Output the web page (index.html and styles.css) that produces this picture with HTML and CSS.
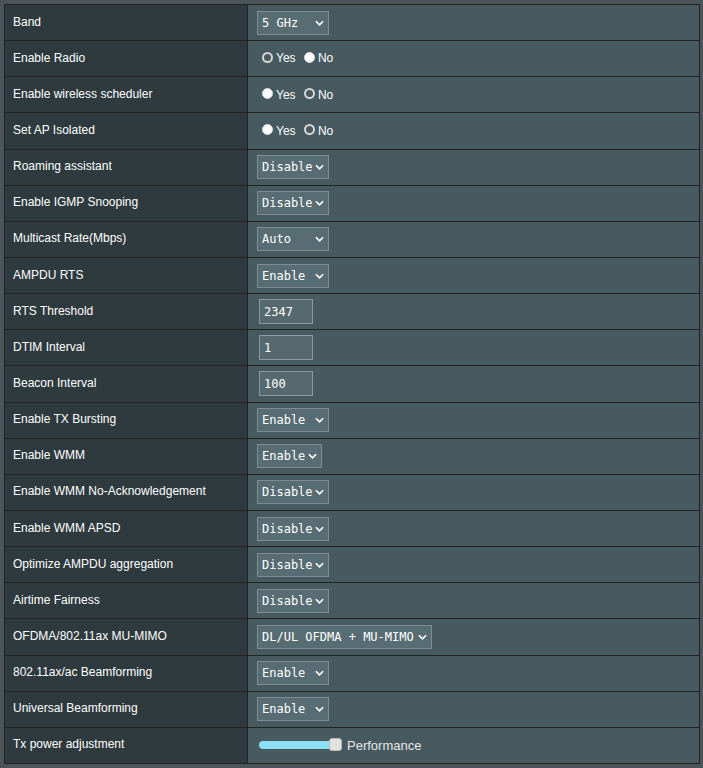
FILE: index.html
```html
<!DOCTYPE html>
<html lang="en">
<head>
    <meta charset="UTF-8">
    <meta name="viewport" content="width=device-width, initial-scale=1.0">
    <title>Wireless - Professional</title>
    <link rel="stylesheet" href="styles.css">
</head>
<body>
    <table class="form-table">
        <tr>
            <th>Band</th>
            <td>
                <span class="select-wrap">
                    <select class="input-option">
                        <option>5 GHz</option>
                        <option>2.4 GHz</option>
                    </select>
                    <svg class="select-arrow" viewBox="0 0 10 6"><path d="M1 1 L5 5 L9 1" /></svg>
                </span>
            </td>
        </tr>
        <tr>
            <th>Enable Radio</th>
            <td>
                <label class="radio"><input type="radio" name="radio" checked> Yes</label>
                <label class="radio"><input type="radio" name="radio"> No</label>
            </td>
        </tr>
        <tr>
            <th>Enable wireless scheduler</th>
            <td>
                <label class="radio"><input type="radio" name="sched"> Yes</label>
                <label class="radio"><input type="radio" name="sched" checked> No</label>
            </td>
        </tr>
        <tr>
            <th>Set AP Isolated</th>
            <td>
                <label class="radio"><input type="radio" name="isolate"> Yes</label>
                <label class="radio"><input type="radio" name="isolate" checked> No</label>
            </td>
        </tr>
        <tr>
            <th>Roaming assistant</th>
            <td>
                <span class="select-wrap">
                    <select class="input-option"><option>Disable</option><option>Enable</option></select>
                    <svg class="select-arrow" viewBox="0 0 10 6"><path d="M1 1 L5 5 L9 1" /></svg>
                </span>
            </td>
        </tr>
        <tr>
            <th>Enable IGMP Snooping</th>
            <td>
                <span class="select-wrap">
                    <select class="input-option"><option>Disable</option><option>Enable</option></select>
                    <svg class="select-arrow" viewBox="0 0 10 6"><path d="M1 1 L5 5 L9 1" /></svg>
                </span>
            </td>
        </tr>
        <tr>
            <th>Multicast Rate(Mbps)</th>
            <td>
                <span class="select-wrap">
                    <select class="input-option"><option>Auto</option><option>6</option></select>
                    <svg class="select-arrow" viewBox="0 0 10 6"><path d="M1 1 L5 5 L9 1" /></svg>
                </span>
            </td>
        </tr>
        <tr>
            <th>AMPDU RTS</th>
            <td>
                <span class="select-wrap">
                    <select class="input-option"><option>Enable</option><option>Disable</option></select>
                    <svg class="select-arrow" viewBox="0 0 10 6"><path d="M1 1 L5 5 L9 1" /></svg>
                </span>
            </td>
        </tr>
        <tr>
            <th>RTS Threshold</th>
            <td><input class="input-text" type="text" value="2347"></td>
        </tr>
        <tr>
            <th>DTIM Interval</th>
            <td><input class="input-text" type="text" value="1"></td>
        </tr>
        <tr>
            <th>Beacon Interval</th>
            <td><input class="input-text" type="text" value="100"></td>
        </tr>
        <tr>
            <th>Enable TX Bursting</th>
            <td>
                <span class="select-wrap">
                    <select class="input-option"><option>Enable</option><option>Disable</option></select>
                    <svg class="select-arrow" viewBox="0 0 10 6"><path d="M1 1 L5 5 L9 1" /></svg>
                </span>
            </td>
        </tr>
        <tr>
            <th>Enable WMM</th>
            <td>
                <span class="select-wrap">
                    <select class="input-option input-option--narrow"><option>Enable</option></select>
                    <svg class="select-arrow" viewBox="0 0 10 6"><path d="M1 1 L5 5 L9 1" /></svg>
                </span>
            </td>
        </tr>
        <tr>
            <th>Enable WMM No-Acknowledgement</th>
            <td>
                <span class="select-wrap">
                    <select class="input-option"><option>Disable</option><option>Enable</option></select>
                    <svg class="select-arrow" viewBox="0 0 10 6"><path d="M1 1 L5 5 L9 1" /></svg>
                </span>
            </td>
        </tr>
        <tr>
            <th>Enable WMM APSD</th>
            <td>
                <span class="select-wrap">
                    <select class="input-option"><option>Disable</option><option>Enable</option></select>
                    <svg class="select-arrow" viewBox="0 0 10 6"><path d="M1 1 L5 5 L9 1" /></svg>
                </span>
            </td>
        </tr>
        <tr>
            <th>Optimize AMPDU aggregation</th>
            <td>
                <span class="select-wrap">
                    <select class="input-option"><option>Disable</option><option>Enable</option></select>
                    <svg class="select-arrow" viewBox="0 0 10 6"><path d="M1 1 L5 5 L9 1" /></svg>
                </span>
            </td>
        </tr>
        <tr>
            <th>Airtime Fairness</th>
            <td>
                <span class="select-wrap">
                    <select class="input-option"><option>Disable</option><option>Enable</option></select>
                    <svg class="select-arrow" viewBox="0 0 10 6"><path d="M1 1 L5 5 L9 1" /></svg>
                </span>
            </td>
        </tr>
        <tr>
            <th>OFDMA/802.11ax MU-MIMO</th>
            <td>
                <span class="select-wrap">
                    <select class="input-option input-option--wide"><option>DL/UL OFDMA + MU-MIMO</option></select>
                    <svg class="select-arrow" viewBox="0 0 10 6"><path d="M1 1 L5 5 L9 1" /></svg>
                </span>
            </td>
        </tr>
        <tr>
            <th>802.11ax/ac Beamforming</th>
            <td>
                <span class="select-wrap">
                    <select class="input-option"><option>Enable</option><option>Disable</option></select>
                    <svg class="select-arrow" viewBox="0 0 10 6"><path d="M1 1 L5 5 L9 1" /></svg>
                </span>
            </td>
        </tr>
        <tr>
            <th>Universal Beamforming</th>
            <td>
                <span class="select-wrap">
                    <select class="input-option"><option>Enable</option><option>Disable</option></select>
                    <svg class="select-arrow" viewBox="0 0 10 6"><path d="M1 1 L5 5 L9 1" /></svg>
                </span>
            </td>
        </tr>
        <tr>
            <th>Tx power adjustment</th>
            <td>
                <div class="power">
                    <div class="power__track">
                        <div class="power__fill"></div>
                        <div class="power__thumb"></div>
                    </div>
                    <span class="power__label">Performance</span>
                </div>
            </td>
        </tr>
    </table>
</body>
</html>
```

FILE: styles.css
```css
* {
    box-sizing: border-box;
}

body {
    margin: 0;
    padding: 4px 3px 4px 4px;
    background: #4b5559;
    font-family: "Liberation Sans", Arial, sans-serif;
}

.form-table {
    width: 696px;
    border-collapse: collapse;
    border: 1px solid #222;
}

.form-table th,
.form-table td {
    height: 36.15px;
    border: 1px solid #222;
    color: #fff;
    font-size: 12px;
}

.form-table th {
    width: 243px;
    padding: 0 0 2px 8px;
    background: #2e3a3e;
    font-weight: normal;
    text-align: left;
}

.form-table td {
    padding: 0 9px;
    background: #475a5f;
}

.select-wrap {
    position: relative;
    display: inline-block;
    vertical-align: middle;
}

.input-option {
    display: block;
    width: 72px;
    height: 24px;
    padding: 0 0 0 4px;
    border: 1px solid #7e8d91;
    border-radius: 0;
    outline: 0;
    appearance: none;
    -webkit-appearance: none;
    background: #576d73;
    color: #fff;
    font-family: "DejaVu Sans Mono", monospace;
    font-size: 12px;
}

.input-option--narrow {
    width: 65px;
}

.input-option--wide {
    width: 175px;
}

.select-arrow {
    position: absolute;
    top: 9px;
    right: 5px;
    width: 9px;
    height: 6px;
    fill: none;
    stroke: #fff;
    stroke-width: 1.8;
    pointer-events: none;
}

.input-text {
    display: block;
    width: 54px;
    height: 25px;
    margin-left: 2px;
    padding: 0 4px;
    border: 1px solid #8a9a9e;
    outline: 0;
    background: #56696e;
    color: #fff;
    font-family: "DejaVu Sans Mono", monospace;
    font-size: 12px;
}

.radio {
    display: inline-flex;
    align-items: center;
    margin-left: 5px;
    color: #fff;
    font-size: 12px;
}

.radio input {
    width: 11px;
    height: 11px;
    margin: 0 3px 2px 0;
    border-radius: 50%;
    appearance: none;
    -webkit-appearance: none;
    background: #fff;
    border: 1px solid #ddd;
}

.radio input:checked {
    background: #4a5a5e;
    border: 2px solid #d6d6d6;
}

.power {
    display: flex;
    align-items: center;
    padding-left: 2px;
}

.power__track {
    position: relative;
    width: 83px;
    height: 14px;
    display: flex;
    align-items: center;
}

.power__fill {
    width: 76px;
    height: 8px;
    border-radius: 4px;
    background: #8ee0f4;
}

.power__thumb {
    position: absolute;
    top: 0;
    right: 0;
    width: 13px;
    height: 13px;
    border-radius: 3px;
    background: #e2e2e2;
    border: 1px solid #b8b8b8;
}

.power__label {
    margin-left: 5px;
    color: #e6e6e6;
    font-size: 13px;
}
```
